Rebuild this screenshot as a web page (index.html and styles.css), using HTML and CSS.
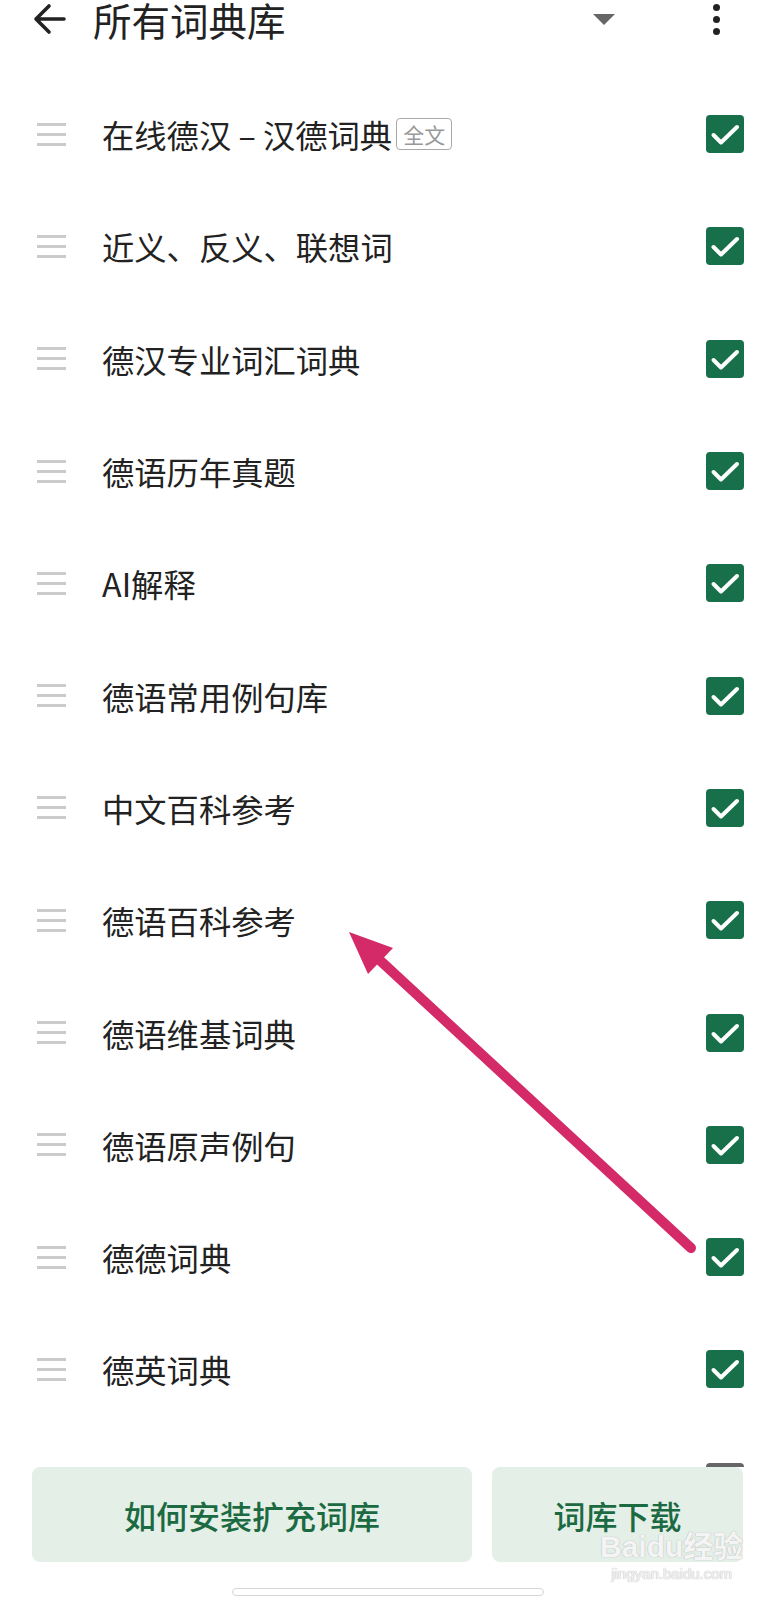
FILE: index.html
```html
<!DOCTYPE html>
<html>
<head>
  <title>所有词典库</title>
  <meta charset="UTF-8" />
  <link rel="stylesheet" href="styles.css">
</head>
<body>
  <header class="topbar">
    <svg class="back" width="34" height="32" viewBox="0 0 34 32">
      <path d="M32 16H4M17 3L4 16L17 29" fill="none" stroke="#222" stroke-width="3.6" stroke-linecap="round" stroke-linejoin="round"/>
    </svg>
    <h1>所有词典库</h1>
    <span class="caret"></span>
    <span class="kebab"><i></i><i></i><i></i></span>
  </header>

  <ul class="dict-list">
    <li><span class="handle"><i></i><i></i><i></i></span><span class="name">在线德汉 – 汉德词典</span><span class="tag">全文</span><span class="check"></span></li>
    <li><span class="handle"><i></i><i></i><i></i></span><span class="name">近义、反义、联想词</span><span class="check"></span></li>
    <li><span class="handle"><i></i><i></i><i></i></span><span class="name">德汉专业词汇词典</span><span class="check"></span></li>
    <li><span class="handle"><i></i><i></i><i></i></span><span class="name">德语历年真题</span><span class="check"></span></li>
    <li><span class="handle"><i></i><i></i><i></i></span><span class="name">AI解释</span><span class="check"></span></li>
    <li><span class="handle"><i></i><i></i><i></i></span><span class="name">德语常用例句库</span><span class="check"></span></li>
    <li><span class="handle"><i></i><i></i><i></i></span><span class="name">中文百科参考</span><span class="check"></span></li>
    <li><span class="handle"><i></i><i></i><i></i></span><span class="name">德语百科参考</span><span class="check"></span></li>
    <li><span class="handle"><i></i><i></i><i></i></span><span class="name">德语维基词典</span><span class="check"></span></li>
    <li><span class="handle"><i></i><i></i><i></i></span><span class="name">德语原声例句</span><span class="check"></span></li>
    <li><span class="handle"><i></i><i></i><i></i></span><span class="name">德德词典</span><span class="check"></span></li>
    <li><span class="handle"><i></i><i></i><i></i></span><span class="name">德英词典</span><span class="check"></span></li>
    <li><span class="handle"><i></i><i></i><i></i></span><span class="check off"></span></li>
  </ul>

  <footer class="actions">
    <div class="buttons">
      <button class="btn wide">如何安装扩充词库</button>
      <button class="btn">词库下载</button>
    </div>
    <div class="home-bar"></div>
  </footer>

  <div class="watermark">
    <span class="wm-logo">Baidu经验</span>
    <span class="wm-url">jingyan.baidu.com</span>
  </div>

  <svg class="pointer" width="776" height="1600" viewBox="0 0 776 1600">
    <line x1="691" y1="1248" x2="372" y2="953" stroke="#d42a68" stroke-width="10" stroke-linecap="round"/>
    <polygon points="349,932 393,948 368,974" fill="#d42a68"/>
  </svg>
</body>
</html>
```

FILE: styles.css
```css
body {
  margin: 0;
  width: 776px;
  height: 1600px;
  overflow: hidden;
  position: relative;
  background: #fff;
  font-family: "Noto Sans CJK SC", "Noto Sans", sans-serif;
  color: #222;
}
.topbar {
  display: flex;
  align-items: center;
  height: 38px;
  padding-left: 32px;
}
.topbar h1 {
  margin: 0 0 0 27px;
  font-size: 38.5px;
  font-weight: normal;
  line-height: 38px;
  color: #222;
}
.caret {
  margin-left: auto;
  width: 0;
  height: 0;
  border-left: 11px solid transparent;
  border-right: 11px solid transparent;
  border-top: 11px solid #666;
}
.kebab {
  display: flex;
  flex-direction: column;
  align-items: center;
  gap: 5px;
  width: 8px;
  margin: 0 56px 0 97px;
}
.kebab i {
  display: block;
  width: 7px;
  height: 7px;
  border-radius: 50%;
  background: #222;
}
.dict-list {
  list-style: none;
  margin: 0;
  padding: 40px 0 0;
}
.dict-list li {
  display: flex;
  align-items: center;
  height: 112.3px;
  padding: 0 32px 0 37px;
}
.handle {
  display: flex;
  flex-direction: column;
  gap: 7px;
  width: 29px;
}
.handle i {
  display: block;
  height: 3px;
  background: #cbcbcb;
}
.name {
  margin-left: 36px;
  font-size: 32.3px;
  line-height: 40px;
  color: #222;
}
.tag {
  margin-left: 4px;
  padding: 0 6px;
  height: 30px;
  line-height: 30px;
  border: 1px solid #aaa;
  border-radius: 4px;
  font-size: 21px;
  color: #999;
}
.check {
  margin-left: auto;
  width: 38px;
  height: 38px;
  border-radius: 4px;
  background: #17704a url("data:image/svg+xml;utf8,<svg xmlns='http://www.w3.org/2000/svg' viewBox='0 0 38 38'><path d='M7.5 20L15 27.5L31 12' fill='none' stroke='white' stroke-width='4' stroke-linecap='round' stroke-linejoin='round'/></svg>") no-repeat center / 38px 38px;
}
.check.off {
  background: #666;
}
.actions {
  position: absolute;
  left: 0;
  right: 0;
  top: 1467px;
  bottom: 0;
  background: #fff;
}
.buttons {
  display: flex;
  gap: 20px;
  padding: 0 33px 0 32px;
}
.btn {
  height: 95px;
  flex: 251px 0 0;
  border: none;
  border-radius: 8px;
  background: #e4efe8;
  color: #1c6a42;
  font-family: "Noto Sans CJK SC", "Noto Sans", sans-serif;
  font-size: 32px;
  font-weight: 500;
}
.btn.wide {
  flex: 1;
}
.home-bar {
  width: 310px;
  height: 6px;
  margin: 26px auto 0;
  border: 1px solid #d6d6d6;
  border-radius: 4px;
}
.watermark {
  position: absolute;
  left: 600px;
  top: 1530px;
  display: flex;
  flex-direction: column;
  align-items: center;
  color: rgba(255, 255, 255, 0.85);
  font-family: "Liberation Sans", "Noto Sans CJK SC", sans-serif;
  text-shadow: 0 0 1px #bbb, 0 0 1px #bbb;
}
.wm-logo {
  font-size: 30px;
  font-weight: bold;
  line-height: 34px;
}
.wm-url {
  font-size: 15px;
  line-height: 20px;
}
.pointer {
  position: absolute;
  left: 0;
  top: 0;
  pointer-events: none;
}
```
